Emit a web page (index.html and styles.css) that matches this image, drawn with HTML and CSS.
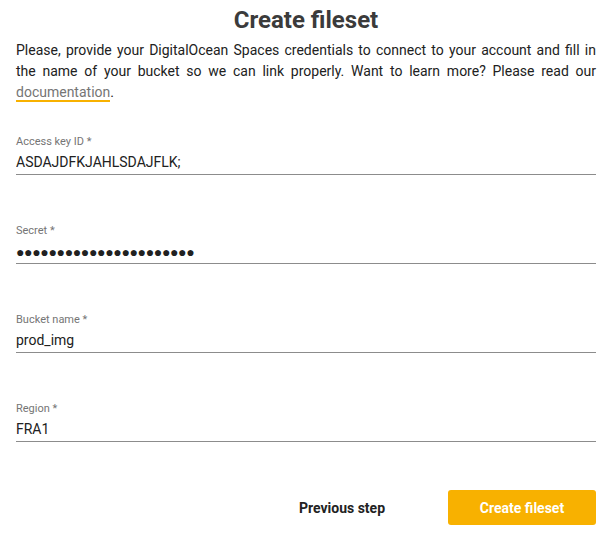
FILE: index.html
```html
<!DOCTYPE html>
<html lang="en">
<head>
<meta charset="utf-8">
<title>Create fileset</title>
<link rel="stylesheet" href="styles.css">
</head>
<body>
<div class="page">
  <h1 class="title">Create fileset</h1>
  <p class="intro">Please, provide your DigitalOcean Spaces credentials to connect to your account and fill in the name of your bucket so we can link properly. Want to learn more? Please read our <a class="doc-link" href="#">documentation</a>.</p>
  <form class="form">
    <div class="field">
      <label class="field-label" for="key">Access key ID *</label>
      <input class="field-input" id="key" type="text" value="ASDAJDFKJAHLSDAJFLK;">
    </div>
    <div class="field">
      <label class="field-label" for="secret">Secret *</label>
      <input class="field-input secret" id="secret" type="text" value="●●●●●●●●●●●●●●●●●●●●●●">
    </div>
    <div class="field">
      <label class="field-label" for="bucket">Bucket name *</label>
      <input class="field-input" id="bucket" type="text" value="prod_img">
    </div>
    <div class="field">
      <label class="field-label" for="region">Region *</label>
      <input class="field-input" id="region" type="text" value="FRA1">
    </div>
  </form>
  <div class="actions">
    <button type="button" class="btn btn-secondary">Previous step</button>
    <button type="button" class="btn btn-primary">Create fileset</button>
  </div>
</div>
</body>
</html>
```
FILE: styles.css
```css
* { box-sizing: border-box; }
html, body { margin: 0; background: #fff; }
body { font-family: Roboto, "Open Sans", sans-serif; color: #212121; }
.page { padding: 6px 18px 0 16px; }
.title {
  margin: 0;
  font-size: 24px;
  line-height: 28px;
  font-weight: 700;
  text-align: center;
  color: #3b3b3b;
}
.intro {
  margin: 6px 0 0;
  font-size: 14px;
  line-height: 21px;
  text-align: justify;
  color: #212121;
}
.doc-link {
  color: #757575;
  text-decoration: none;
  border-bottom: 2px solid #f8b100;
}
.form { display: flex; flex-direction: column; gap: 49px; margin-top: 32px; }
.field { display: flex; flex-direction: column; }
.field-label {
  font-size: 11px;
  line-height: 14px;
  color: #757575;
}
.field-input {
  border: 0;
  border-bottom: 1px solid #8c8c8c;
  padding: 0;
  height: 26px;
  font-family: Roboto, sans-serif;
  font-size: 14px;
  color: #212121;
  background: transparent;
  outline: none;
  width: 100%;
}
.field-input.secret { font-size: 14px; letter-spacing: -0.35px; padding-top: 2px; }
.actions {
  display: flex;
  justify-content: flex-end;
  gap: 31px;
  margin-top: 48px;
}
.btn {
  height: 35px;
  border: 0;
  border-radius: 3px;
  font-family: Roboto, sans-serif;
  font-size: 14px;
  font-weight: 700;
  cursor: pointer;
}
.btn-secondary { width: 150px; background: #fff; color: #222; }
.btn-primary { width: 148px; background: #f8b100; color: #fff; }
```
